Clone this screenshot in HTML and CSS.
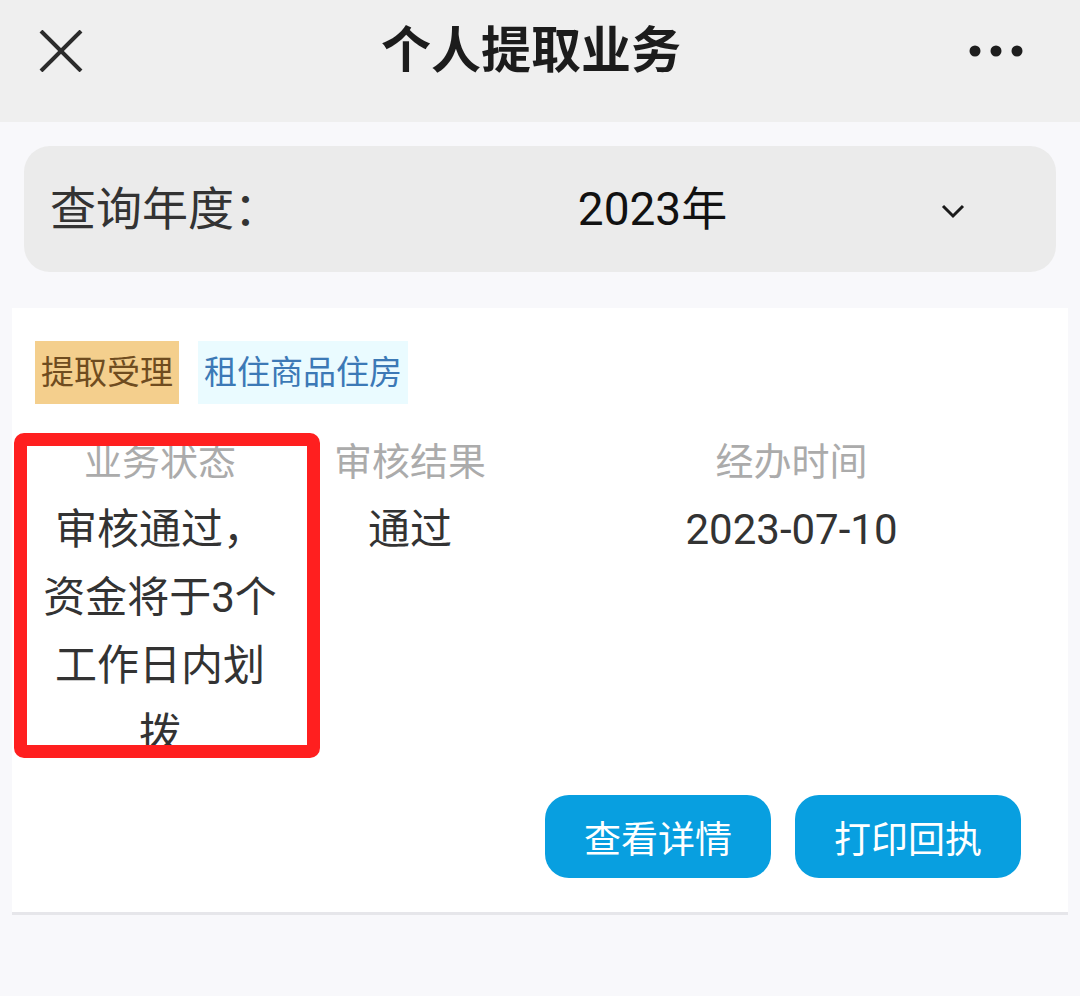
FILE: index.html
```html
<!DOCTYPE html>
<html lang="zh-CN">
<head>
<meta charset="utf-8">
<title>个人提取业务</title>
<link rel="stylesheet" href="styles.css">
</head>
<body>
<header class="topbar">
  <div class="topbar-left">
    <svg class="icon-close" width="44" height="42" viewBox="0 0 44 42">
      <line x1="2" y1="1" x2="42" y2="41" stroke="#2b2b2b" stroke-width="4"/>
      <line x1="42" y1="1" x2="2" y2="41" stroke="#2b2b2b" stroke-width="4"/>
    </svg>
  </div>
  <h1 class="title">个人提取业务</h1>
  <div class="topbar-right">
    <svg class="icon-more" width="54" height="12" viewBox="0 0 54 12">
      <circle cx="6" cy="6" r="5.5" fill="#1e1e1e"/>
      <circle cx="27" cy="6" r="5.5" fill="#1e1e1e"/>
      <circle cx="48" cy="6" r="5.5" fill="#1e1e1e"/>
    </svg>
  </div>
</header>

<main class="content">
  <div class="year-select">
    <span class="year-label">查询年度：</span>
    <span class="year-value">2023年</span>
    <svg class="chevron" width="24" height="16" viewBox="0 0 24 16">
      <polyline points="2,3 12,13 22,3" fill="none" stroke="#1a1a1a" stroke-width="3"/>
    </svg>
  </div>

  <section class="card">
    <div class="tags">
      <span class="tag tag-orange">提取受理</span>
      <span class="tag tag-blue">租住商品住房</span>
    </div>

    <div class="info">
      <div class="info-col">
        <div class="info-label">业务状态</div>
        <div class="info-value">审核通过，资金将于3个工作日内划拨</div>
      </div>
      <div class="info-col">
        <div class="info-label">审核结果</div>
        <div class="info-value">通过</div>
      </div>
      <div class="info-col">
        <div class="info-label">经办时间</div>
        <div class="info-value">2023-07-10</div>
      </div>
      <div class="highlight"></div>
    </div>

    <div class="actions">
      <button class="btn">查看详情</button>
      <button class="btn">打印回执</button>
    </div>
  </section>
</main>
</body>
</html>
```

FILE: styles.css
```css
* {
  box-sizing: border-box;
}

html, body {
  margin: 0;
  padding: 0;
}

body {
  width: 1080px;
  min-height: 996px;
  background: #f8f8fb;
  font-family: Roboto, "Noto Sans CJK SC", "Noto Sans", sans-serif;
  color: #333;
}

.topbar {
  height: 122px;
  background: #efefef;
  display: grid;
  grid-template-columns: 1fr auto 1fr;
  align-items: center;
  padding: 0 57px 20px 39px;
}

.topbar-left {
  display: flex;
  align-items: center;
}

.topbar-right {
  display: flex;
  justify-content: flex-end;
  align-items: center;
}

.icon-close,
.icon-more {
  display: block;
}

.title {
  margin: 0;
  font-size: 50px;
  font-weight: 700;
  color: #1c1c1c;
  line-height: 60px;
}

.content {
  padding: 24px 0 0;
}

.year-select {
  margin: 0 24px;
  height: 126px;
  background: #ebebeb;
  border-radius: 26px;
  display: flex;
  align-items: center;
  padding: 0 91px 0 26px;
}

.year-label {
  width: 234px;
  font-size: 46px;
  color: #333;
  line-height: 60px;
}

.year-value {
  flex: 1;
  text-align: center;
  padding-left: 80px;
  font-size: 46px;
  color: #111;
  line-height: 60px;
}

.chevron {
  display: block;
  margin-top: 4px;
}

.card {
  margin: 36px 12px 0;
  background: #fff;
  padding: 33px 20px 34px 23px;
  border-bottom: 3px solid #e6e6ea;
}

.tags {
  display: flex;
  gap: 19px;
}

.tag {
  height: 63px;
  line-height: 63px;
  padding: 0 6px;
  font-size: 33px;
}

.tag-orange {
  background: #f4cf8d;
  color: #6f4c1f;
}

.tag-blue {
  background: #eafbff;
  color: #3c79b6;
}

.info {
  position: relative;
  margin-top: 24px;
  display: grid;
  grid-template-columns: 250px 250px 1fr;
}

.info-col {
  text-align: center;
}

.info-label {
  font-size: 38px;
  line-height: 68px;
  color: #ababab;
}

.info-value {
  font-size: 42px;
  line-height: 68px;
  color: #333;
}

.highlight {
  position: absolute;
  left: -21px;
  top: 5px;
  width: 306px;
  height: 325px;
  border: 13px solid #ff1f1f;
  border-radius: 10px;
  pointer-events: none;
}

.actions {
  display: flex;
  justify-content: flex-end;
  gap: 24px;
  margin-top: 27px;
  padding-right: 27px;
}

.btn {
  width: 226px;
  height: 83px;
  border: none;
  border-radius: 24px;
  background: #089fe0;
  color: #fff;
  font-family: "Noto Sans CJK SC", sans-serif;
  font-size: 37px;
  padding: 0;
}
```
